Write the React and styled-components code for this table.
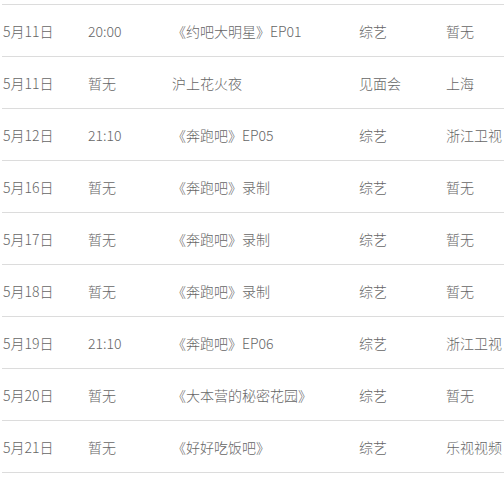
import React from "react";
import styled, { createGlobalStyle } from "styled-components";

const Global = createGlobalStyle`
  html, body { margin: 0; padding: 0; background: #fff; overflow: hidden; }
  body { font-family: "Noto Sans CJK SC", "Noto Sans", sans-serif; }
`;

const Table = styled.div`
  width: 560px;
  padding: 4px 0 0 2px;
`;

const Row = styled.div`
  display: grid;
  grid-template-columns: 85px 84px 187px 87px 1fr;
  align-items: center;
  height: 51px;
  border-top: 1px solid #dcdcdc;
  ${(p) => (p.$last ? "border-bottom: 1px solid #dcdcdc;" : "")}
  padding-left: 1px;
`;

const Cell = styled.div`
  font-size: 14px;
  font-weight: 300;
  color: #666;
  white-space: nowrap;
  line-height: 20px;
`;

const data = [
  ["5月11日", "20:00", "《约吧大明星》EP01", "综艺", "暂无"],
  ["5月11日", "暂无", "沪上花火夜", "见面会", "上海"],
  ["5月12日", "21:10", "《奔跑吧》EP05", "综艺", "浙江卫视"],
  ["5月16日", "暂无", "《奔跑吧》录制", "综艺", "暂无"],
  ["5月17日", "暂无", "《奔跑吧》录制", "综艺", "暂无"],
  ["5月18日", "暂无", "《奔跑吧》录制", "综艺", "暂无"],
  ["5月19日", "21:10", "《奔跑吧》EP06", "综艺", "浙江卫视"],
  ["5月20日", "暂无", "《大本营的秘密花园》", "综艺", "暂无"],
  ["5月21日", "暂无", "《好好吃饭吧》", "综艺", "乐视视频"],
];

export default function App() {
  return (
    <>
      <Global />
      <Table>
        {data.map((r, i) => (
          <Row key={i} $last={i === data.length - 1}>
            {r.map((c, j) => (
              <Cell key={j}>{c}</Cell>
            ))}
          </Row>
        ))}
      </Table>
    </>
  );
}
